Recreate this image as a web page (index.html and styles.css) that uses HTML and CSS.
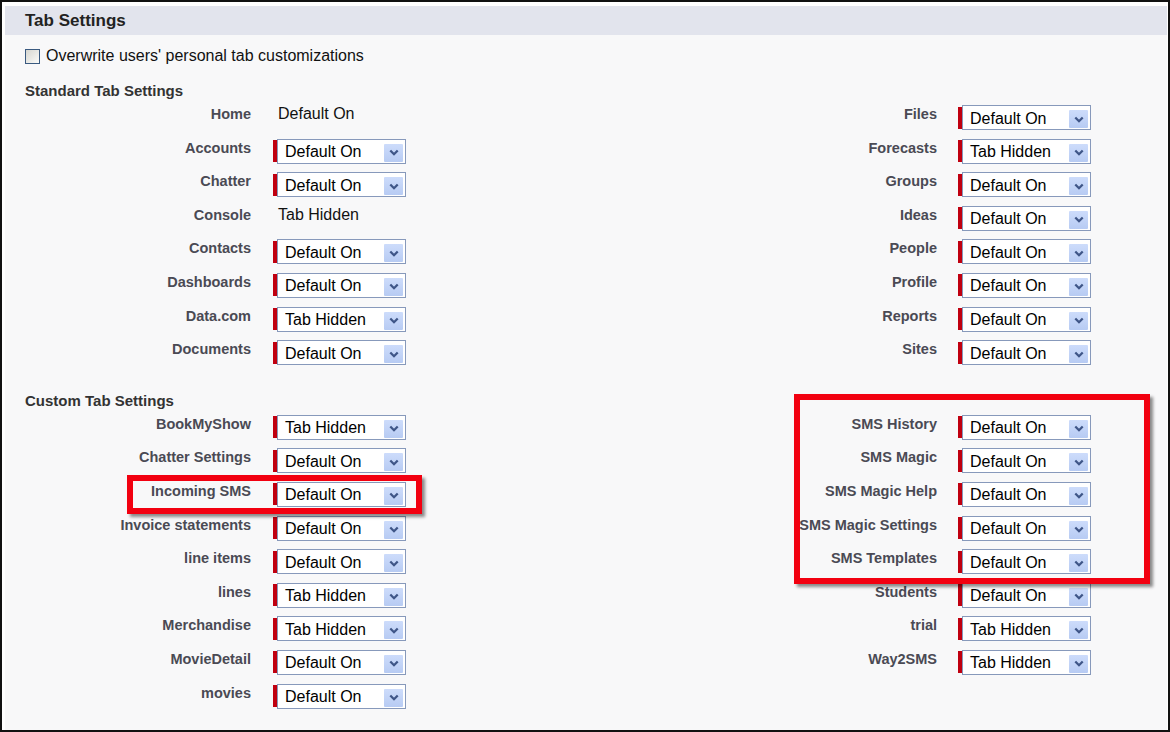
FILE: index.html
```html
<!DOCTYPE html>
<html lang="en">
<head>
    <meta charset="UTF-8">
    <title>Tab Settings</title>
    <link rel="stylesheet" href="styles.css">
</head>
<body>
    <div class="frame">
        <div class="panel">
            <div class="panel-head">Tab Settings</div>
            <div class="panel-body">
                <label class="overwrite"><span class="checkbox"></span>Overwrite users' personal tab customizations</label>

                <div class="section-title">Standard Tab Settings</div>
                <div class="tab-grid" id="standard-grid"></div>

                <div class="section-title custom">Custom Tab Settings</div>
                <div class="tab-grid" id="custom-grid"></div>
            </div>
        </div>

        <div class="callout callout-left"></div>
        <div class="callout callout-right"></div>
    </div>

    <script>
        const DO = 'Default On';
        const TH = 'Tab Hidden';

        // [label, value, static?]
        const standard = {
            left: [['Home', DO, true], ['Accounts', DO], ['Chatter', DO], ['Console', TH, true],
                   ['Contacts', DO], ['Dashboards', DO], ['Data.com', TH], ['Documents', DO]],
            right: [['Files', DO], ['Forecasts', TH], ['Groups', DO], ['Ideas', DO],
                    ['People', DO], ['Profile', DO], ['Reports', DO], ['Sites', DO]]
        };
        const custom = {
            left: [['BookMyShow', TH], ['Chatter Settings', DO], ['Incoming SMS', DO],
                   ['Invoice statements', DO], ['line items', DO], ['lines', TH],
                   ['Merchandise', TH], ['MovieDetail', DO], ['movies', DO]],
            right: [['SMS History', DO], ['SMS Magic', DO], ['SMS Magic Help', DO],
                    ['SMS Magic Settings', DO], ['SMS Templates', DO], ['Students', DO],
                    ['trial', TH], ['Way2SMS', TH]]
        };

        const chevron = '<svg width="10" height="7" viewBox="0 0 10 7"><path d="M1.3 1.5 L5 5.2 L8.7 1.5" fill="none" stroke="#3f5688" stroke-width="2.3"/></svg>';

        function cells(item, side) {
            if (!item) return `<div class="lbl ${side}"></div><div class="fld"></div>`;
            const [label, value, isStatic] = item;
            const field = isStatic
                ? `<div class="static">${value}</div>`
                : `<div class="req"><div class="req-bar"></div><div class="pick"><span class="pick-val">${value}</span><span class="pick-btn">${chevron}</span></div></div>`;
            return `<div class="lbl ${side}">${label}</div><div class="fld">${field}</div>`;
        }

        function fillGrid(id, data) {
            const rows = Math.max(data.left.length, data.right.length);
            let html = '';
            for (let i = 0; i < rows; i++) {
                html += cells(data.left[i], 'l') + cells(data.right[i], 'r');
            }
            document.getElementById(id).innerHTML = html;
        }

        fillGrid('standard-grid', standard);
        fillGrid('custom-grid', custom);
    </script>
</body>
</html>
```

FILE: styles.css
```css
html, body {
    margin: 0;
    padding: 0;
    background: #fff;
}
body {
    font-family: "Liberation Sans", Arial, sans-serif;
    color: #000;
}
.frame {
    position: relative;
    width: 1170px;
    height: 732px;
    box-sizing: border-box;
    border: 2px solid #111;
    padding: 4px 1px 0 3px;
    background: #fff;
    overflow: hidden;
}
.panel {
    height: 100%;
    background: #f8f8f9;
}
.panel-head {
    height: 29px;
    line-height: 29px;
    padding-left: 20px;
    background: #e2e4ed;
    font-size: 17px;
    font-weight: bold;
    color: #222;
}
.panel-body {
    padding: 11px 0 0 20px;
}
.overwrite {
    display: flex;
    align-items: center;
    height: 20px;
    font-size: 16px;
    color: #111;
}
.checkbox {
    width: 13px;
    height: 13px;
    margin-right: 6px;
    border: 1px solid #3a5a80;
    background: linear-gradient(135deg, #d6d6d0, #fbfbf9);
}
.section-title {
    margin-top: 16px;
    height: 18px;
    line-height: 18px;
    font-size: 15px;
    font-weight: bold;
    color: #333;
}
.section-title.custom {
    margin-top: 23px;
}
.tab-grid {
    display: grid;
    grid-template-columns: 248px 438px 247px 1fr;
    grid-auto-rows: 33.6px;
}
.lbl {
    padding-top: 6px;
    line-height: 16px;
    font-size: 14.5px;
    font-weight: bold;
    color: #4a4a54;
    text-align: right;
    white-space: nowrap;
}
.lbl.l {
    padding-right: 22px;
}
.lbl.r {
    padding-right: 21px;
}
.fld {
    padding-top: 5px;
}
.static {
    padding: 1px 0 0 5px;
    line-height: 16px;
    font-size: 16px;
    color: #111;
}
.req {
    display: flex;
    align-items: center;
    height: 25px;
}
.req-bar {
    width: 4px;
    height: 22px;
    background: #c00010;
}
.pick {
    display: flex;
    align-items: center;
    width: 129px;
    height: 25px;
    box-sizing: border-box;
    padding-left: 7px;
    border: 1px solid #8799bb;
    background: #fff;
    font-size: 16px;
    color: #000;
}
.pick-val {
    padding-top: 2px;
}
.pick-btn {
    display: flex;
    align-items: center;
    justify-content: center;
    align-self: flex-start;
    width: 19px;
    height: 18px;
    margin: 4px 2px 0 auto;
    background: linear-gradient(#cddcfb, #b7cbf3);
    border-radius: 1px;
}
.callout {
    position: absolute;
    box-sizing: border-box;
    border: 6px solid #f20010;
    box-shadow: 3px 3px 3px rgba(0, 0, 0, 0.45);
}
.callout-left {
    left: 125px;
    top: 473px;
    width: 295px;
    height: 39px;
}
.callout-right {
    left: 792px;
    top: 392px;
    width: 356px;
    height: 190px;
}
```
